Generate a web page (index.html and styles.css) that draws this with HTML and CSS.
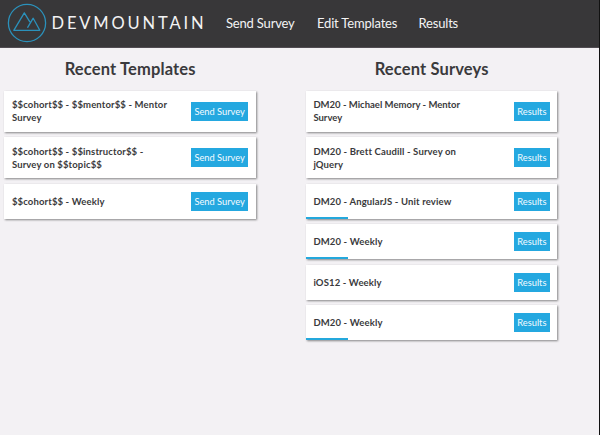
FILE: index.html
```html
<!DOCTYPE html>
<html lang="en">
<head>
<meta charset="utf-8">
<title>DevMountain Surveys</title>
<link rel="stylesheet" href="styles.css">
</head>
<body>
<header class="navbar">
  <div class="brand">
    <svg class="logo" viewBox="0 0 40 40" width="40" height="40" fill="none" stroke="#2b91bb" stroke-width="1.3" stroke-linejoin="round" stroke-linecap="round">
      <circle cx="20" cy="20" r="18.6"/>
      <path d="M20.4 27.3H6.8L17.3 9.9L22.7 18.6M20.9 27.3H32.8L26.2 15.2L20.7 24.3"/>
    </svg>
    <span class="wordmark">DEVMOUNTAIN</span>
  </div>
  <nav class="links"><a class="send">Send Survey</a><a class="edit">Edit Templates</a><a>Results</a></nav>
</header>
<main class="columns">
  <section class="column">
    <h1>Recent Templates</h1>
    <article class="card tall"><p>$$cohort$$ - $$mentor$$ - Mentor<br>Survey</p><button class="wide">Send Survey</button></article>
    <article class="card tall"><p>$$cohort$$ - $$instructor$$ -<br>Survey on $$topic$$</p><button class="wide">Send Survey</button></article>
    <article class="card"><p>$$cohort$$ - Weekly</p><button class="wide">Send Survey</button></article>
  </section>
  <section class="column">
    <h1>Recent Surveys</h1>
    <article class="card tall"><p class="snug">DM20 - Michael Memory - Mentor<br>Survey</p><button>Results</button></article>
    <article class="card tall"><p>DM20 - Brett Caudill - Survey on<br>jQuery</p><button>Results</button></article>
    <article class="card progress"><p>DM20 - AngularJS - Unit review</p><button>Results</button></article>
    <article class="card progress"><p>DM20 - Weekly</p><button>Results</button></article>
    <article class="card"><p>iOS12 - Weekly</p><button>Results</button></article>
    <article class="card progress"><p>DM20 - Weekly</p><button>Results</button></article>
  </section>
</main>
</body>
</html>
```
FILE: styles.css
```css
* { box-sizing: border-box; }
body {
  margin: 0;
  height: 435px;
  overflow: hidden;
  background: #f3f1f4;
  border-right: 1px solid #111;
  font-family: Lato, "Open Sans", sans-serif;
  color: #3a3a3c;
}
.navbar {
  display: flex;
  align-items: center;
  height: 48px;
  padding: 0 0 2px 7px;
  background: #383739;
  border-bottom: 1px solid #514c52;
  color: #f3f3f4;
}
.brand { display: flex; align-items: center; width: 219px; }
.logo { flex: none; }
.wordmark { margin-left: 4.5px; padding-top: 1px; font-size: 16.5px; line-height: 20px; letter-spacing: 2.85px; }
.links { display: flex; gap: 23px; padding-top: 1px; font-size: 13px; line-height: 18px; letter-spacing: -0.18px; white-space: nowrap; }
.send { width: 68px; }
.edit { width: 78.5px; }
.columns {
  display: grid;
  grid-template-columns: 251.5px 251.5px;
  column-gap: 50px;
  padding: 10px 0 0 4.4px;
}
.column { display: flex; flex-direction: column; gap: 5.5px; }
h1 { margin: 0 0 5.4px; font-size: 16.5px; line-height: 22px; font-weight: 700; letter-spacing: 0.14px; text-align: center; white-space: nowrap; }
.card {
  position: relative;
  display: flex;
  align-items: center;
  justify-content: space-between;
  height: 35px;
  padding: 0 7.5px;
  background: #fff;
  box-shadow: 0.5px 0.5px 2px rgba(0, 0, 0, .45);
}
.card.tall { height: 41px; }
.card p { margin: 0; font-size: 9.5px; line-height: 13px; font-weight: 700; letter-spacing: 0.14px; white-space: nowrap; }
.card p.snug { letter-spacing: 0; }
.card button {
  width: 36px;
  height: 19px;
  padding: 0;
  border: 0;
  background: #24a8e0;
  color: #f4fbff;
  font: 9.3px/19px Lato, "Open Sans", sans-serif;
  white-space: nowrap;
}
.card button.wide { width: 57.5px; }
.progress::after {
  content: "";
  position: absolute;
  left: 0;
  bottom: 0;
  width: 42px;
  height: 2px;
  background: #24a8dc;
}
```
